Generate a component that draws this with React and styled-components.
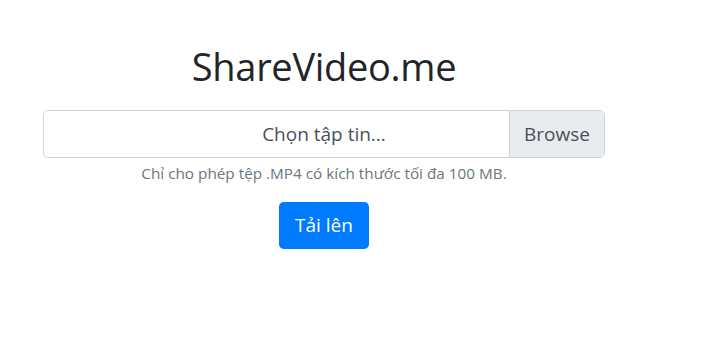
import React from 'react';
import styled, { createGlobalStyle } from 'styled-components';

const GlobalStyle = createGlobalStyle`
  body {
    margin: 0;
    background: #fff;
    font-family: "Open Sans", "Liberation Sans", sans-serif;
    color: #212529;
  }
`;

const Page = styled.div`
  width: 710px;
  height: 362px;
  padding-top: 44px;
  box-sizing: border-box;
`;

const Column = styled.div`
  margin-left: 43px;
  width: 562px;
  display: flex;
  flex-direction: column;
  align-items: center;
`;

const Title = styled.h1`
  margin: 0;
  font-size: 38px;
  font-weight: 400;
  line-height: 1.2;
  letter-spacing: -0.3px;
`;

const FileBox = styled.label`
  position: relative;
  margin-top: 20px;
  width: 100%;
  height: 48px;
  box-sizing: border-box;
  border: 1px solid #ced4da;
  border-radius: 4.8px;
  display: flex;
  align-items: center;
  justify-content: center;
  font-size: 19px;
  color: #495057;
  cursor: pointer;
`;

const Browse = styled.span`
  position: absolute;
  top: 0;
  right: 0;
  bottom: 0;
  width: 94px;
  display: flex;
  align-items: center;
  justify-content: center;
  background: #e9ecef;
  border-left: 1px solid #ced4da;
  border-radius: 0 4px 4px 0;
`;

const Hint = styled.small`
  margin-top: 5px;
  font-size: 15.3px;
  color: #6c757d;
`;

const Upload = styled.button`
  margin-top: 19px;
  width: 90px;
  height: 47px;
  border: none;
  border-radius: 4.8px;
  background: #007bff;
  color: #fff;
  font-family: inherit;
  font-size: 19px;
  cursor: pointer;
`;

export default function App() {
  return (
    <Page>
      <GlobalStyle />
      <Column>
        <Title>ShareVideo.me</Title>
        <FileBox>
          Chọn tập tin...
          <Browse>Browse</Browse>
        </FileBox>
        <Hint>Chỉ cho phép tệp .MP4 có kích thước tối đa 100 MB.</Hint>
        <Upload>Tải lên</Upload>
      </Column>
    </Page>
  );
}
